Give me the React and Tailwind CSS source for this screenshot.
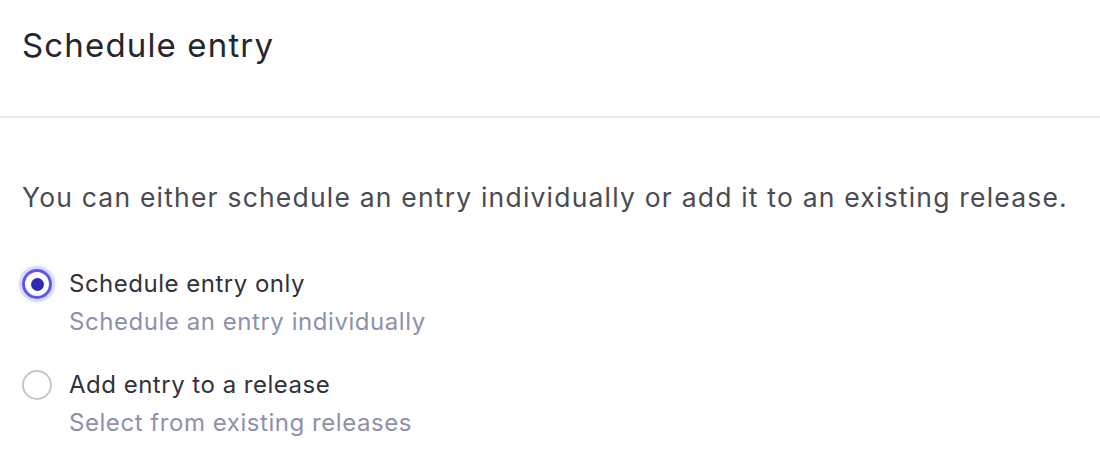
import { useState } from 'react';

const options = [
  { id: 'only', label: 'Schedule entry only', hint: 'Schedule an entry individually' },
  { id: 'release', label: 'Add entry to a release', hint: 'Select from existing releases' },
];

function Radio({ checked }) {
  if (checked) {
    return (
      <span className="flex h-[30px] w-[30px] shrink-0 items-center justify-center rounded-full border-[3px] border-[#5b57f0] bg-white shadow-[0_0_0_3px_#dcdafc,0_0_6px_2px_#e4e2fd]">
        <span className="block h-[13px] w-[13px] rounded-full bg-[#2f2ab0]" />
      </span>
    );
  }
  return <span className="block h-[30px] w-[30px] shrink-0 rounded-full border-[2.5px] border-[#c6c6cc] bg-white" />;
}

export default function App() {
  const [value, setValue] = useState('only');

  return (
    <div className="h-[475px] w-[1100px] bg-white font-['Inter',sans-serif]">
      {/* Header */}
      <div className="h-[116px] px-[22px] pt-[22px]">
        <h2 className="text-[33px] leading-[46px] tracking-[1.15px] text-[#26262c]">Schedule entry</h2>
      </div>
      <div className="h-[2px] bg-[#e9e9ea]" />

      {/* Body */}
      <div className="px-[22px] pt-[60px]">
        <p className="text-[26.5px] leading-[38px] tracking-[1.2px] text-[#4a4a52]">
          You can either schedule an entry individually or add it to an existing release.
        </p>

        <div className="mt-[49px] flex flex-col gap-[25px]">
          {options.map((opt) => (
            <label key={opt.id} className="flex cursor-pointer items-start gap-[17px]" onClick={() => setValue(opt.id)}>
              <span className="pt-[4px]">
                <Radio checked={value === opt.id} />
              </span>
              <span className="flex flex-col">
                <span className="text-[24px] leading-[38px] tracking-[0.5px] text-[#32323a]">{opt.label}</span>
                <span className="text-[24px] leading-[38px] tracking-[0.55px] text-[#8e90ad]">{opt.hint}</span>
              </span>
            </label>
          ))}
        </div>
      </div>
    </div>
  );
}
